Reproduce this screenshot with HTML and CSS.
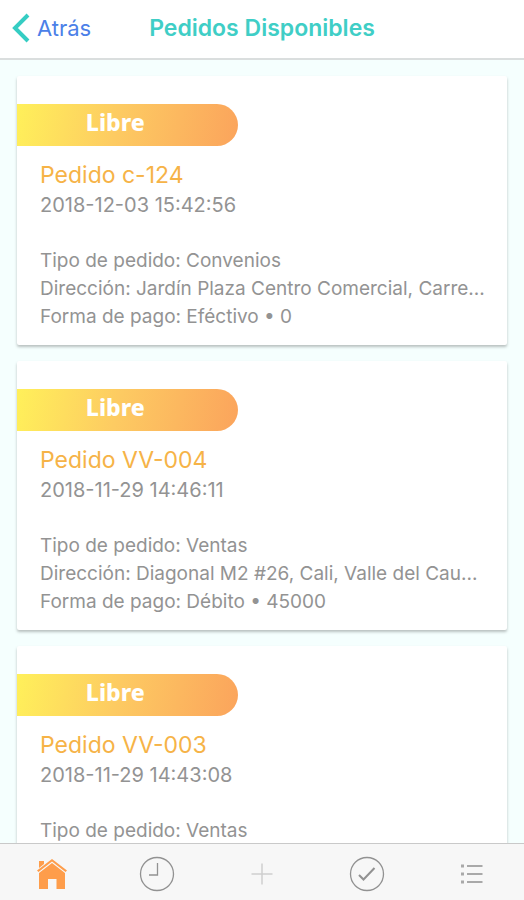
FILE: index.html
```html
<!DOCTYPE html>
<html lang="es">
<head>
    <meta charset="UTF-8">
    <meta name="viewport" content="width=device-width, initial-scale=1.0">
    <title>Pedidos Disponibles</title>
    <link rel="stylesheet" href="styles.css">
</head>
<body>
    <!-- Header -->
    <header class="navbar">
        <a href="#" class="back">
            <svg width="18" height="30" viewBox="0 0 18 30" fill="none" stroke="#35cdc3" stroke-width="4"><path d="M16 2L3 15L16 28"/></svg>
            <span>Atrás</span>
        </a>
        <h1>Pedidos Disponibles</h1>
    </header>

    <!-- Orders -->
    <main class="orders">
        <article class="card">
            <div class="status">Libre</div>
            <div class="card-body">
                <h2>Pedido c-124</h2>
                <p class="date">2018-12-03 15:42:56</p>
                <p>Tipo de pedido: Convenios</p>
                <p>Dirección: Jardín Plaza Centro Comercial, Carre...</p>
                <p>Forma de pago: Eféctivo • 0</p>
            </div>
        </article>
        <article class="card">
            <div class="status">Libre</div>
            <div class="card-body">
                <h2>Pedido VV-004</h2>
                <p class="date">2018-11-29 14:46:11</p>
                <p>Tipo de pedido: Ventas</p>
                <p>Dirección: Diagonal M2 #26, Cali, Valle del Cau...</p>
                <p>Forma de pago: Débito • 45000</p>
            </div>
        </article>
        <article class="card">
            <div class="status">Libre</div>
            <div class="card-body">
                <h2>Pedido VV-003</h2>
                <p class="date">2018-11-29 14:43:08</p>
                <p>Tipo de pedido: Ventas</p>
            </div>
        </article>
    </main>

    <!-- Tabs -->
    <nav class="tabs">
        <a href="#" aria-label="Inicio">
            <svg width="36" height="36" viewBox="0 0 36 36" fill="#fe9d4b">
                <path d="M5 5h5v3l-5 4z"/>
                <path d="M18 3L33 14.500L31.500 16L18 5.500L4.500 16L3 14.500Z"/>
                <path d="M18 7L31 17V33H22.500V23H14V33H5V17Z"/>
            </svg>
        </a>
        <a href="#" aria-label="Historial">
            <svg width="36" height="36" viewBox="0 0 36 36" fill="none" stroke="#929292" stroke-width="1.300">
                <circle cx="18" cy="18" r="16.500"/>
                <path d="M18.500 7V19H10"/>
            </svg>
        </a>
        <a href="#" aria-label="Nuevo">
            <svg width="36" height="36" viewBox="0 0 36 36" fill="none" stroke="#cfcfcf" stroke-width="1.500">
                <path d="M18 7.500V28.500M7.500 18H28.500"/>
            </svg>
        </a>
        <a href="#" aria-label="Completados">
            <svg width="36" height="36" viewBox="0 0 36 36" fill="none" stroke="#929292" stroke-width="1.300">
                <circle cx="18" cy="18" r="16.500"/>
                <path d="M10 19L14.500 23.500L25.500 12" stroke-width="2"/>
            </svg>
        </a>
        <a href="#" aria-label="Menú">
            <svg width="36" height="36" viewBox="0 0 36 36" fill="none" stroke="#a9a9a9" stroke-width="1.800">
                <path d="M13 10H28.500M13 18H28.500M13 26H28.500"/>
                <path d="M7 10H10M7 18H10M7 26H10" stroke-width="3"/>
            </svg>
        </a>
    </nav>
</body>
</html>
```

FILE: styles.css
```css
/* General Styling */
* {
    margin: 0;
    padding: 0;
    box-sizing: border-box;
}

body {
    display: flex;
    flex-direction: column;
    height: 100vh;
    background-color: #f5fffe;
    color: #939393;
    font-family: Inter, "Liberation Sans", sans-serif;
    font-size: 19px;
}

a {
    text-decoration: none;
}

svg {
    display: block;
}

/* Header */
.navbar {
    display: grid;
    grid-template-columns: 1fr auto 1fr;
    align-items: center;
    flex-shrink: 0;
    height: 60px;
    padding: 0 12px 2px;
    background-color: #ffffff;
    border-bottom: 2px solid #dadede;
}

.back {
    display: flex;
    align-items: center;
    gap: 7px;
    color: #4b80e8;
    font-size: 22px;
}

.navbar h1 {
    color: #3fcec6;
    font-size: 23px;
    font-weight: 600;
}

/* Orders */
.orders {
    display: flex;
    flex-direction: column;
    flex: 1;
    gap: 16px;
    min-height: 0;
    padding: 16px 17px;
    overflow-y: auto;
    scrollbar-width: none;
}

.card {
    flex-shrink: 0;
    padding: 28px 0 14px;
    background-color: #ffffff;
    border-radius: 2px;
    box-shadow: 0 2px 3px rgba(0, 0, 0, 0.25);
}

.status {
    width: 45%;
    height: 42px;
    padding-right: 24px;
    border-radius: 0 21px 21px 0;
    background: linear-gradient(100deg, #fff05a, #fdcb62 45%, #fba45c);
    color: #ffffff;
    font-family: "Noto Sans", sans-serif;
    font-size: 23px;
    font-weight: 800;
    line-height: 36px;
    text-align: center;
}

.card-body {
    padding: 14px 16px 0 23px;
    line-height: 28px;
}

.card-body h2 {
    color: #f6b347;
    font-size: 23px;
    font-weight: 400;
    line-height: 31px;
}

.card-body p {
    overflow: hidden;
    text-overflow: ellipsis;
    white-space: nowrap;
}

.card-body .date {
    margin-bottom: 28px;
    font-size: 20px;
}

/* Tabs */
.tabs {
    display: flex;
    flex-shrink: 0;
    height: 57px;
    background-color: #f7f7f7;
    border-top: 1px solid #c9c9c9;
}

.tabs a {
    display: flex;
    flex: 1;
    align-items: center;
    justify-content: center;
    padding-top: 4px;
}
```
